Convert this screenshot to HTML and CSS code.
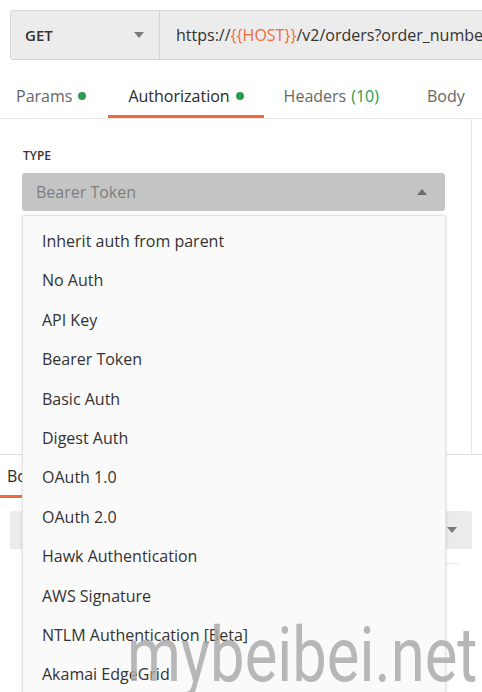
FILE: index.html
```html
<!DOCTYPE html>
<html lang="en">
<head>
    <meta charset="UTF-8">
    <meta name="viewport" content="width=device-width, initial-scale=1.0">
    <title>Request</title>
    <link rel="stylesheet" href="styles.css">
</head>
<body>
    <div class="request-bar">
        <div class="method">
            <span>GET</span>
            <span class="caret-down"></span>
        </div>
        <div class="url">https://<span class="var">{{HOST}}</span>/v2/orders?order_number=</div>
    </div>

    <div class="tabs">
        <div class="tab first">Params <span class="dot"></span></div>
        <div class="tab active">Authorization <span class="dot"></span></div>
        <div class="tab">Headers <span class="count">(10)</span></div>
        <div class="tab last">Body</div>
    </div>

    <div class="workspace">
        <div class="auth-pane">
            <div class="label">TYPE</div>
            <div class="select">
                <span>Bearer Token</span>
                <span class="caret-up"></span>
            </div>
        </div>
        <div class="side-pane"></div>
    </div>

    <div class="response">
        <div class="response-tabs">
            <div class="response-tab">Body</div>
        </div>
        <div class="response-bar">
            <span class="caret-down"></span>
        </div>
    </div>

    <ul class="menu">
        <li>Inherit auth from parent</li>
        <li>No Auth</li>
        <li>API Key</li>
        <li>Bearer Token</li>
        <li>Basic Auth</li>
        <li>Digest Auth</li>
        <li>OAuth 1.0</li>
        <li>OAuth 2.0</li>
        <li>Hawk Authentication</li>
        <li>AWS Signature</li>
        <li>NTLM Authentication [Beta]</li>
        <li>Akamai EdgeGrid</li>
    </ul>

    <div class="watermark">mybeibei.net</div>
</body>
</html>
```

FILE: styles.css
```css
html, body {
    margin: 0;
    height: 100%;
    overflow: hidden;
}

body {
    position: relative;
    font-family: 'Open Sans', 'DejaVu Sans', sans-serif;
    color: #333;
    background-color: #fff;
}

/* method + url row */
.request-bar {
    display: flex;
    height: 48px;
    margin: 10px 0 0 10px;
    width: 600px;
    background-color: #ececec;
    border: 1px solid #d6d6d6;
    border-radius: 3px;
}

.method {
    display: flex;
    align-items: center;
    justify-content: space-between;
    width: 119px;
    padding: 0 15px 0 14px;
    border-right: 1px solid #d6d6d6;
    font-size: 15px;
    font-weight: 600;
}

.url {
    display: flex;
    align-items: center;
    padding-left: 16px;
    font-size: 16px;
    white-space: nowrap;
}

.var {
    color: #f26b3a;
}

.caret-down, .caret-up {
    width: 0;
    height: 0;
    border-left: 5px solid transparent;
    border-right: 5px solid transparent;
}

.caret-down {
    border-top: 6px solid #7b7b7b;
}

.caret-up {
    border-bottom: 6px solid #6b6b6b;
}

/* request tabs */
.tabs {
    display: flex;
    height: 59px;
    padding-top: 16px;
    box-sizing: border-box;
    border-bottom: 1px solid #e6e6e6;
    white-space: nowrap;
}

.tab {
    display: flex;
    align-items: center;
    padding: 0 20px;
    font-size: 16px;
    color: #666;
    border-bottom: 3px solid transparent;
}

.tab.first {
    padding: 0 22px 0 16px;
}

.tab.last {
    padding-left: 28px;
}

.tab.active {
    color: #282828;
    border-bottom-color: #f26b3a;
}

.dot {
    display: inline-block;
    width: 8px;
    height: 8px;
    margin-left: 6px;
    border-radius: 50%;
    background-color: #2a9d4f;
}

.count {
    margin-left: 5px;
    color: #2a9d4f;
}

/* authorization panel */
.workspace {
    display: flex;
    height: 335px;
}

.auth-pane {
    width: 472px;
    border-right: 1px solid #e6e6e6;
    padding: 28px 26px 0 22px;
    box-sizing: border-box;
}

.label {
    padding-left: 1px;
    font-size: 12px;
    font-weight: 600;
    color: #333;
}

.select {
    display: flex;
    align-items: center;
    justify-content: space-between;
    height: 38px;
    margin-top: 9px;
    padding: 0 18px 0 14px;
    background-color: #c4c4c4;
    border-radius: 3px;
    font-size: 16px;
    color: #7e7e7e;
}

/* response area */
.response {
    border-top: 1px solid #e0e0e0;
}

.response-tabs {
    display: flex;
    height: 43px;
}

.response-tab {
    display: flex;
    align-items: center;
    padding: 2px 20px 0 7px;
    font-size: 16px;
    color: #282828;
    border-bottom: 3px solid #f26b3a;
}

.response-bar {
    display: flex;
    align-items: center;
    justify-content: flex-end;
    height: 38px;
    margin: 13px 10px 0 10px;
    padding-right: 15px;
    background-color: #ececec;
    border-radius: 3px;
    border-bottom: 14px solid #fff;
    box-shadow: 0 14px 0 -13px #e6e6e6;
}

/* auth type dropdown, open over the panels */
.menu {
    position: absolute;
    left: 22px;
    top: 215px;
    width: 424px;
    height: 500px;
    margin: 0;
    padding: 6px 0 0;
    list-style: none;
    box-sizing: border-box;
    background-color: #fafafa;
    border: 1px solid #e2e2e2;
    border-radius: 3px;
    box-shadow: 0 1px 4px rgba(0, 0, 0, 0.12);
}

.menu li {
    height: 39.4px;
    line-height: 39.4px;
    padding-left: 19px;
    font-size: 16px;
    color: #333;
}

.watermark {
    position: absolute;
    left: 127px;
    top: 617px;
    font-family: Roboto, 'Liberation Sans', sans-serif;
    font-size: 76px;
    line-height: 1;
    color: rgba(170, 170, 170, 0.85);
    white-space: nowrap;
    transform: scaleX(0.81);
    transform-origin: left top;
}
```
